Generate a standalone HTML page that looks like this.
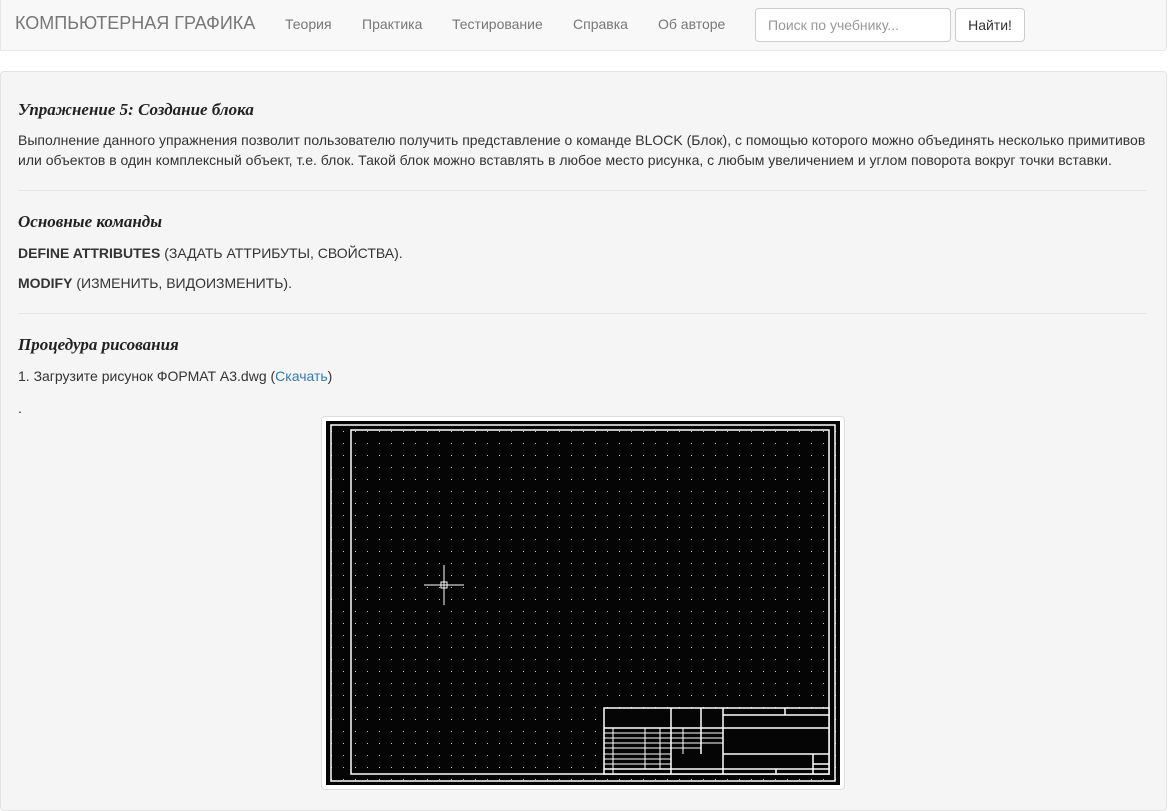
<!DOCTYPE html>
<html><head><meta charset="utf-8">
<style>
*{margin:0;padding:0;box-sizing:border-box}
body{width:1173px;height:801px;background:#fff;font-family:"Liberation Sans",sans-serif;font-size:14px;color:#333;position:relative;overflow:hidden}
.nav{position:absolute;left:0;top:0;width:1167px;height:51px;background:#f8f8f8;border:1px solid #e7e7e7;border-top:none;border-radius:0 0 4px 0}
.nav span{position:absolute;top:16px;color:#777;font-size:14px}
.brand{left:14px;top:13px!important;font-size:18px!important}
.inp{position:absolute;left:754px;top:8px;width:196px;height:34px;border:1px solid #ccc;border-radius:4px;background:#fff;color:#999;padding:8px 12px}
.btn{position:absolute;left:954px;top:8px;width:70px;height:34px;border:1px solid #ccc;border-radius:4px;background:#fff;color:#333;text-align:center;padding-top:8px}
.panel{position:absolute;left:0;top:71px;width:1167px;height:740px;background:#f5f5f5;border:1px solid #e3e3e3;border-radius:4px}
.t{position:absolute;left:18px;white-space:nowrap;line-height:20px}
h{position:absolute;left:18px;font-family:"Liberation Serif",serif;font-style:italic;font-weight:bold;font-size:17px;color:#222}
.hr{position:absolute;left:18px;width:1129px;height:1px;background:#e6e6e6}
a{color:#337ab7;text-decoration:none}
</style></head><body>
<div class="nav">
<span class="brand">КОМПЬЮТЕРНАЯ ГРАФИКА</span>
<span style="left:284px">Теория</span>
<span style="left:361px">Практика</span>
<span style="left:451px">Тестирование</span>
<span style="left:572px">Справка</span>
<span style="left:657px">Об авторе</span>
<div class="inp">Поиск по учебнику...</div>
<div class="btn">Найти!</div>
</div>
<div class="panel"></div>
<h style="top:100px">Упражнение 5: Создание блока</h>
<div class="t" style="top:130px">Выполнение данного упражнения позволит пользователю получить представление о команде BLOCK (Блок), с помощью которого можно объединять несколько примитивов<br>или объектов в один комплексный объект, т.е. блок. Такой блок можно вставлять в любое место рисунка, с любым увеличением и углом поворота вокруг точки вставки.</div>
<div class="hr" style="top:190px"></div>
<h style="top:212px">Основные команды</h>
<div class="t" style="top:243px"><b>DEFINE ATTRIBUTES</b> (ЗАДАТЬ АТТРИБУТЫ, СВОЙСТВА).</div>
<div class="t" style="top:273px"><b>MODIFY</b> (ИЗМЕНИТЬ, ВИДОИЗМЕНИТЬ).</div>
<div class="hr" style="top:313px"></div>
<h style="top:335px">Процедура рисования</h>
<div class="t" style="top:366px">1. Загрузите рисунок ФОРМАТ А3.dwg (<a>Скачать</a>)</div>
<div class="t" style="top:398px">.</div>
<div style="position:absolute;left:321px;top:416px;width:524px;height:374px;background:#fff;border:1px solid #ddd;border-radius:4px"></div>
<svg style="position:absolute;left:0;top:0" width="1173" height="801">
<defs><pattern id="d" x="343" y="431" width="12" height="12" patternUnits="userSpaceOnUse"><rect width="1" height="1" fill="#ccc"/></pattern></defs>
<rect x="326" y="421" width="514" height="364" fill="#050505"/>
<rect x="326" y="421" width="514" height="364" fill="url(#d)"/>
<g stroke="#fff" fill="none" stroke-width="1.5">
<rect x="331" y="425" width="504" height="356"/>
<rect x="351" y="430" width="478" height="344"/>
<rect x="604" y="708" width="225" height="66" fill="#050505"/>
<path d="M671 708V774M701 708V754M723 708V774M604 728H829M723 715H829M785 708V715M723 754H829M813 754V774M813 764H829M604 769H829M776 769V774"/>
<path stroke-width="1" d="M604 733H723M604 738H723M604 743H723M604 748H701M604 754H671M604 759H671M604 764H671M613 728V774M645 728V769M660 728V769M683 728V754"/>
<path stroke-width="1" d="M424 585H464M444 565V605"/>
<rect x="441" y="582" width="6" height="6" stroke-width="1"/>
</g>
</svg>
</body></html>
